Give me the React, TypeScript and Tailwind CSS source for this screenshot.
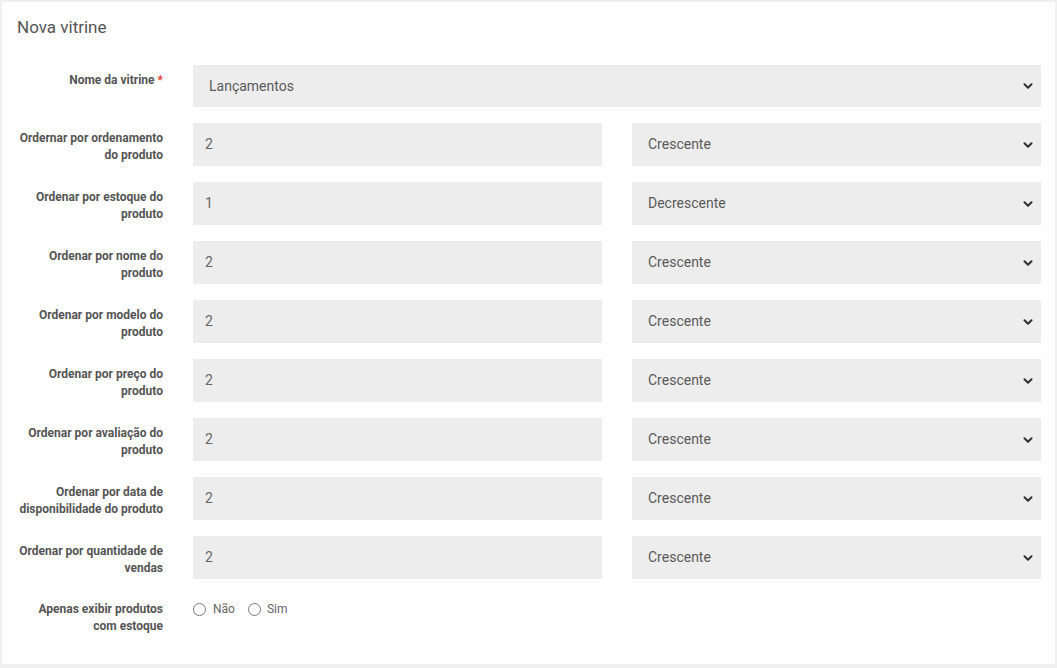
import { ChevronDown } from 'lucide-react';

const rows = [
  { label: ['Ordernar por ordenamento', 'do produto'], value: '2', order: 'Crescente' },
  { label: ['Ordenar por estoque do', 'produto'], value: '1', order: 'Decrescente' },
  { label: ['Ordenar por nome do', 'produto'], value: '2', order: 'Crescente' },
  { label: ['Ordenar por modelo do', 'produto'], value: '2', order: 'Crescente' },
  { label: ['Ordenar por preço do', 'produto'], value: '2', order: 'Crescente' },
  { label: ['Ordenar por avaliação do', 'produto'], value: '2', order: 'Crescente' },
  { label: ['Ordenar por data de', 'disponibilidade do produto'], value: '2', order: 'Crescente' },
  { label: ['Ordenar por quantidade de', 'vendas'], value: '2', order: 'Crescente' },
];

function Select({ value, first }: { value: string; first?: boolean }) {
  return (
    <div
      className={`flex ${first ? 'h-[42px]' : 'h-[43px]'} flex-1 items-center justify-between bg-[#ededed] pl-4 pr-[6px] text-[14px] text-[#5a5a5a]`}
    >
      <span>{value}</span>
      <ChevronDown className="h-[14px] w-[14px] text-[#333]" strokeWidth={3.5} />
    </div>
  );
}

function Label({ lines, required }: { lines: string[]; required?: boolean }) {
  return (
    <div className="w-[146px] shrink-0 pt-[7px] text-right text-[12px] font-bold leading-[17px] text-[#555]">
      {lines.map((l, i) => (
        <div key={i}>
          {l}
          {required && i === lines.length - 1 && <span className="text-[#e53935]"> *</span>}
        </div>
      ))}
    </div>
  );
}

export default function App() {
  return (
    <div className="min-h-screen bg-[#f0f0f0] p-[2px]" style={{ fontFamily: 'Roboto, "Liberation Sans", sans-serif' }}>
      <div className="h-[662px] bg-white pl-[15px] pr-[14px]">
        <h1 className="pt-[15px] text-[17px] leading-[20px] text-[#555]">Nova vitrine</h1>

        <div className="mt-[28px] flex flex-col gap-[16px]">
          <div className="flex gap-[30px]">
            <Label lines={['Nome da vitrine']} required />
            <Select value="Lançamentos" first />
          </div>

          {rows.map((r, i) => (
            <div key={i} className="flex gap-[30px]">
              <Label lines={r.label} />
              <div className="flex h-[43px] w-[409px] shrink-0 items-center bg-[#ededed] pl-[12px] text-[14px] text-[#666]">
                {r.value}
              </div>
              <Select value={r.order} />
            </div>
          ))}

          <div className="mt-[6px] flex gap-[30px]">
            <div className="w-[146px] shrink-0 text-right text-[12px] font-bold leading-[17px] text-[#555]">
              <div>Apenas exibir produtos</div>
              <div>com estoque</div>
            </div>
            <div className="flex items-start gap-[13px] text-[12px] leading-[17px] text-[#666]">
              <label className="flex items-center gap-[7px]">
                <span className="h-[13px] w-[13px] rounded-full border border-[#777] bg-white" />
                Não
              </label>
              <label className="flex items-center gap-[6px]">
                <span className="h-[13px] w-[13px] rounded-full border border-[#777] bg-white" />
                Sim
              </label>
            </div>
          </div>
        </div>
      </div>
    </div>
  );
}
